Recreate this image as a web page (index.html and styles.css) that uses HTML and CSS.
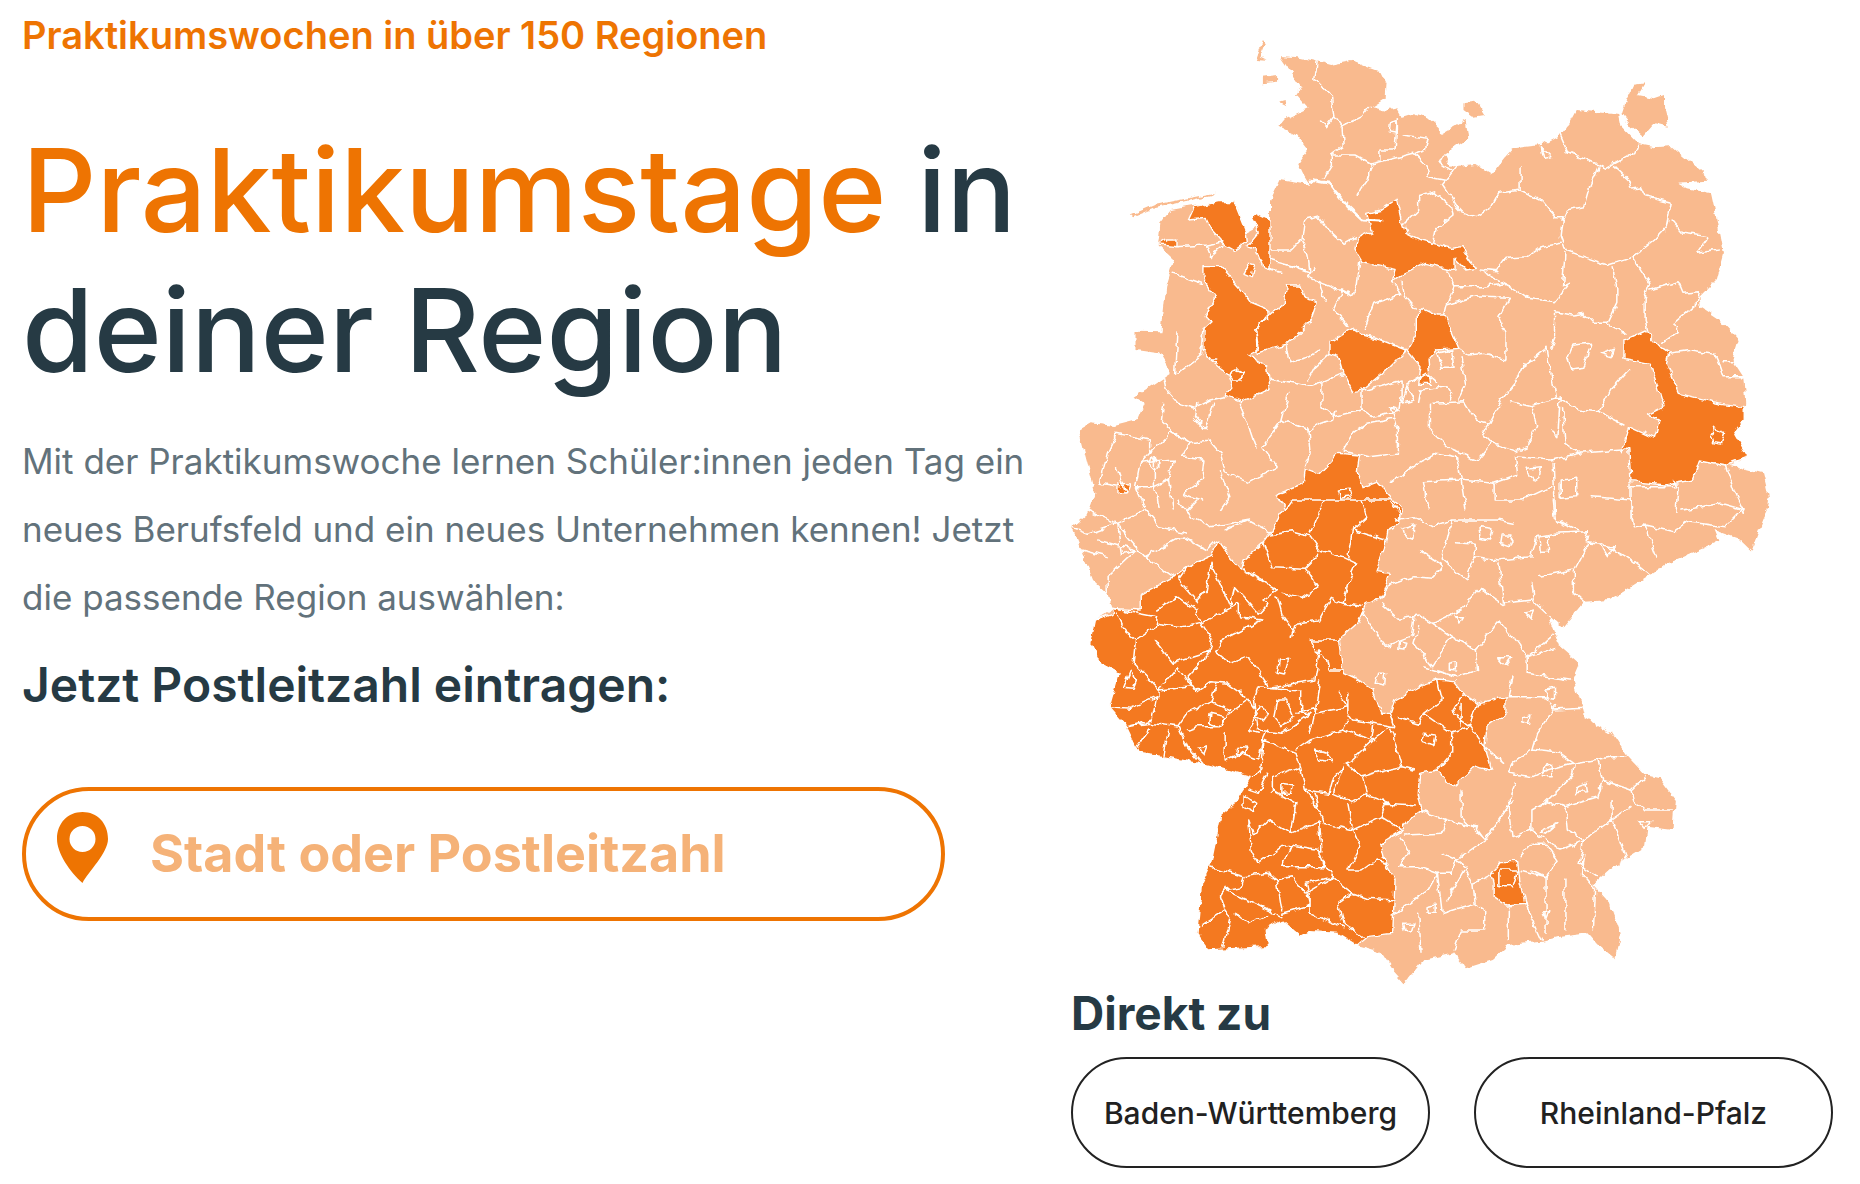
FILE: index.html
```html
<!DOCTYPE html>
<html lang="de">
<head>
<meta charset="utf-8">
<title>Praktikumstage in deiner Region</title>
<link rel="stylesheet" href="styles.css">
</head>
<body>
<main class="page">
  <section class="intro">
    <p class="kicker">Praktikumswochen in über 150 Regionen</p>
    <h1 class="headline"><span class="accent">Praktikumstage</span> in<br>deiner Region</h1>
    <p class="lead">Mit der Praktikumswoche lernen Schüler:innen jeden Tag ein neues Berufsfeld und ein neues Unternehmen kennen! Jetzt die passende Region auswählen:</p>
    <h2 class="plz-title">Jetzt Postleitzahl eintragen:</h2>
    <div class="search">
      <svg class="pin" viewBox="0 0 51 71"><path fill-rule="evenodd" d="M25.5 0C11 0 0 11 0 27C0 41 13 60 25.5 71C31 60 51 41 51 27C51 11 40 0 25.5 0ZM25.5 14A13 13 0 1 1 25.5 40A13 13 0 1 1 25.5 14Z"/></svg>
      <span class="search-text">Stadt oder Postleitzahl</span>
    </div>
  </section>
  <section class="side">
    <svg class="map" viewBox="0 0 740 965">
      <defs>
        <filter id="rough" x="-2%" y="-2%" width="104%" height="104%" color-interpolation-filters="sRGB">
          <feTurbulence type="fractalNoise" baseFrequency="0.11" numOctaves="2" seed="4" result="n"/>
          <feDisplacementMap in="SourceGraphic" in2="n" scale="7" xChannelSelector="R" yChannelSelector="G"/>
        </filter>
      </defs>
      <g filter="url(#rough)">
        <g transform="scale(.4719 .33333)">
          <!-- north half -->
          <path class="land" d="M466,108 505,112 540,122 575,135 620,122 650,140 680,155 692,190 690,235 660,262 690,272 715,265 725,290 750,280 780,295 805,325 805,345 860,300 865,355 815,405 825,440 880,432 915,462 945,408 960,385 1020,375 1060,345 1080,310 1095,270 1160,280 1185,285 1190,320 1225,372 1260,382 1295,378 1330,420 1370,470 1370,482 1310,488 1330,505 1380,520 1392,600 1405,700 1390,780 1355,830 1358,860 1395,895 1438,960 1425,1020 1448,1070 1452,1150 1450,1200 1430,1240 1458,1310 1420,1335 1490,1360 1502,1430 1495,1480 60,1480 75,1420 40,1230 65,1210 115,1218 165,1200 180,1150 158,1130 215,1078 235,1060 210,1000 160,990 160,935 215,937 225,800 242,720 208,675 213,610 235,570 272,560 340,545 370,545 395,640 420,620 405,590 415,580 445,600 445,540 465,480 530,495 515,460 505,430 525,390 500,345 465,320 480,295 525,265 500,225 510,200ZM415,120 430,60 436,70 425,112 440,122ZM430,170 460,165 460,185 430,190ZM465,245 478,240 480,256ZM855,250 880,245 898,285 875,290 855,270ZM1215,195 1240,190 1225,225 1260,235 1280,225 1280,260 1290,320 1260,310 1235,350 1210,320 1190,285 1200,240ZM150,585 200,555 330,518 320,526 200,565 155,592Z"/>
          <g transform="translate(0 1440)">
            <path class="land" d="M1500,30 1490,60 1465,155 1435,115 1385,90 1395,125 1320,170 1285,190 1250,225 1200,270 1165,300 1110,305 1065,385 1035,345 1050,400 1060,440 1100,490 1085,540 1105,620 1110,650 1170,700 1200,765 1240,825 1270,835 1305,900 1300,990 1245,980 1240,1040 1200,1075 1165,1110 1130,1155 1165,1210 1188,1300 1175,1375 1145,1340 1120,1300 1060,1310 1020,1325 950,1335 915,1380 860,1405 835,1360 770,1380 730,1450 705,1410 680,1355 630,1335 590,1300 530,1295 510,1310 470,1260 435,1290 440,1340 315,1350 290,1300 300,1150 320,1090 340,950 365,920 405,830 310,795 220,770 165,760 135,670 105,620 125,520 85,490 65,430 75,360 110,330 100,280 70,240 45,150 25,80 55,45 60,30Z"/>
          </g>

          <!-- highlighted regions, north -->
          <path class="hot" d="M272,600 285,560 340,545 368,545 395,640 397,665 370,690 345,670 320,630 308,595ZM405,590 415,580 445,600 445,750 468,758 430,740 415,690 397,680 420,640 415,615ZM208,675 225,660 250,660 250,680ZM390,760 400,730 412,735 405,770ZM305,740 340,740 385,810 405,850 440,870 442,895 415,925 420,990 400,1005 440,1040 445,1105 385,1145 350,1125 365,1100 355,1060 320,1020 305,990 305,925 320,905 310,890 330,830 305,780ZM415,930 445,880 475,850 480,795 510,795 520,835 545,845 530,905 510,935 480,975 440,990 418,1000ZM650,580 680,570 715,535 725,600 735,640 765,660 830,685 850,680 880,745 860,750 835,715 835,750 775,730 720,770 705,785 710,745 640,725 625,690 630,655 660,635ZM570,970 620,925 640,945 680,960 735,990 700,1040 640,1110 620,1115 600,1060 590,1010 570,1000ZM735,990 755,940 755,885 770,865 800,885 815,885 845,985 800,990 780,1020 785,1090 760,1090 765,1040ZM1195,960 1240,930 1275,985 1290,1000 1285,1030 1310,1120 1400,1150 1450,1160 1450,1200 1430,1240 1458,1310 1410,1335 1355,1320 1340,1380 1285,1395 1210,1385 1205,1280 1190,1295 1205,1220 1260,1255 1270,1200 1245,1185 1280,1160 1265,1090 1250,1030 1195,1015ZM125,1390 148,1392 140,1422 125,1420ZM460,1425 515,1395 520,1345 550,1360 590,1300 635,1305 630,1350 640,1400 670,1385 725,1470 720,1500 490,1500Z"/>
          <g transform="translate(0 1440)">
            <path class="hot" d="M490,0 465,50 445,100 430,130 390,180 385,210 360,170 335,120 320,170 270,200 240,230 170,285 170,330 110,325 115,340 75,360 65,430 85,490 125,520 105,620 135,670 165,760 220,770 310,795 405,830 365,920 340,950 320,1090 300,1150 290,1300 315,1350 440,1340 435,1290 470,1260 510,1310 530,1295 590,1300 630,1335 650,1310 705,1300 710,1140 690,1090 680,1030 720,1000 745,950 765,930 757,880 760,820 800,810 830,860 850,840 880,800 915,810 900,740 905,680 945,640 945,590 885,610 855,580 835,545 800,540 775,550 710,600 700,640 680,640 660,570 630,540 600,520 590,420 630,370 650,310 680,295 700,220 670,215 690,130 695,90 720,70 720,40 700,0ZM915,1120 935,1085 970,1085 975,1150 985,1210 945,1215 920,1190 920,1150Z"/>
          </g>

          <!-- boundaries, north -->
          <path class="lines" d="M545,125 540,180 575,230 580,290 565,320 550,300M580,290 598,325 600,380 575,405 575,440 560,475M598,320 640,290 655,262M715,290 710,390 680,390 680,420M725,345 780,355 775,390 755,400M660,432 750,400 775,435 780,470 815,480M575,405 625,405 660,432 650,480 630,520M815,405 805,430 830,455M840,440 810,495 840,560 850,575 880,590 915,560 930,520 975,510 1020,540 1050,590 1065,590M1140,440 1120,510 1110,560 1075,570 1065,600M975,440 975,510M1060,345 1075,395 1140,435 1155,445 1220,395 1225,375M1175,440 1205,480 1210,505 1230,500 1240,530 1295,550 1285,620 1260,660 1215,710 1160,735 1110,710 1070,690 1060,650 1065,590M1295,600 1320,640 1375,650 1350,700 1395,690M790,665 795,630 835,585 830,560 795,515 760,530 760,570 730,610M1060,670 1020,680 990,710 945,715 925,755 890,750M1070,700 1065,800 1080,790 1050,845 990,835 950,795 895,755M1170,740 1180,800 1180,850 1160,910 1130,910 1110,880 1085,885 1050,875 1050,950 1040,985M1215,715 1250,790 1240,830 1240,900 1245,930M1250,810 1310,785 1320,820 1355,815 1350,850 1300,910 1310,935 1275,970M1160,910 1195,940M1290,1000 1340,990 1385,1000 1395,1030 1405,1070 1450,1070M1405,1025 1425,1025M240,760 300,790M245,680 310,675 345,665M310,675 320,710 345,680M445,690 490,690 510,660 525,700 530,760 470,730M445,720 520,750M515,660 520,600 550,590 570,630 600,670 625,650M540,740 525,770 555,790 590,810 600,810 580,870 610,920M550,790 560,840M635,725 630,790 620,825 600,810M710,790 720,825 665,850 645,925M725,790 730,830 755,870M820,855 880,830 950,835 930,890 945,940 945,1020 900,1000 865,1005 845,985M820,750 835,800 820,855 815,885M835,800 895,800 935,790M250,1060 300,1005 305,925M250,935 245,1060M220,1075 225,1110 250,1150 285,1165 320,1140 350,1130M445,1075 500,1090 530,1100 550,1090 600,1060M480,980 485,1025 530,1010 550,990M570,1000 540,1040 525,1080M640,1115 640,1170 580,1190 555,1160 555,1090M640,1115 725,1080 725,1130 720,1170 660,1190 640,1170M735,1095 775,1060 800,1090M760,1150 765,1110 820,1100 830,1120 825,1140M790,1150 855,1145 880,1200 910,1210 935,1140 965,1090 980,1040 1030,985M850,1010 860,1100 845,1140M1060,1130 1000,1160 955,1145M1030,985 1050,1130 1100,1170 1140,1175 1165,1110 1205,1050M1060,1130 1055,1250 1040,1230M1065,1160 1070,1270 1105,1305M1000,1160 1010,1215 990,1280 965,1295 915,1270 895,1240 910,1210M1140,1175 1195,1215M785,1150 785,1230 830,1290 885,1320 915,1270M720,1170 700,1160 715,1230 715,1300 655,1310M655,1310 600,1290 620,1240 650,1210 705,1195M470,1200 430,1280 460,1340 400,1385 350,1355 340,1300 315,1260M220,1150 215,1200 240,1235 275,1270 315,1260M290,1150 285,1190 310,1230 325,1150M380,1150 400,1220 415,1285M485,1120 470,1200 530,1230 550,1210 580,1200 585,1170M525,1220 530,1300 520,1340M800,1300 770,1320 750,1340 700,1390M1040,1320 1100,1300 1190,1290M1210,1390 1210,1500M1045,1330 1050,1480M800,1300 840,1310 850,1375M770,1385 850,1380 920,1390 970,1365 965,1310 1040,1320M920,1390 920,1440 980,1440 1040,1400M1410,1335 1430,1420 1450,1480M1310,1400 1305,1480M100,1300 120,1240 190,1260 190,1300 235,1235 275,1270 260,1310 305,1320 300,1380 260,1420M170,1330 160,1400 180,1460M200,1310 200,1400 210,1460M240,1320 230,1380 240,1470M100,1300 85,1390 130,1400M120,1340 140,1420M190,1300 170,1330 240,1320M160,1400 200,1400 230,1380M340,1355 360,1430 340,1470M290,1440 270,1470M260,1420 300,1440M770,1385 780,1470M850,1380 860,1470M1130,1430 1210,1440M1300,1380 1305,1400 1210,1400M1450,1470 1400,1450 1320,1470M330,1020 320,1020"/>
          <path class="river" d="M530,480 570,490 610,560 640,600 680,603"/>
          <path class="lines" d="M375,1050 390,1060 385,1080 365,1080 358,1062ZM1385,1222 1408,1235 1402,1272 1385,1268 1380,1245ZM590,1410 615,1405 620,1430 595,1435ZM990,1345 1020,1340 1015,1375 1005,1385 992,1365ZM1085,975 1125,970 1110,1045 1085,1050 1075,1010ZM800,1000 830,990 835,1045 810,1045ZM195,1310 210,1335 200,1350 190,1335ZM1060,1380 1095,1375 1095,1430 1060,1435ZM700,310 715,305 715,340 698,335ZM1020,380 1040,410 1025,415ZM1145,1000 1175,985 1170,1010ZM735,1100 750,1140 725,1150Z"/>

          <!-- boundaries, south -->
          <g transform="translate(0 1440)">
            <path class="lines" d="M445,105 490,95 530,110 550,150 600,170 630,190 610,250 600,310M560,0 530,100M640,0 650,50 620,90 610,170M620,90 690,120M430,130 450,200 520,205 550,160M520,205 545,260 510,295 470,280M600,310 640,320M460,290 470,340 495,390 490,410M600,310 575,295 550,360 500,370 495,400M390,210 460,270 430,300 440,310 420,340 370,260 360,320 320,190M270,200 250,240 290,305 310,270 320,190M205,330 250,290 290,330 300,370M110,325 205,350 200,380 160,420M120,340 140,400 160,420 155,490 210,570 250,500 280,560 210,570 210,590M205,370 260,380 300,370 325,425 320,455 240,490 200,420M300,370 380,310 380,350 430,360 345,420 330,455 360,490 400,470 440,555M320,455 270,530 290,575 320,545 355,550 395,590M450,560 540,540 550,450M420,560 510,570 510,640 530,640 470,700 420,690 410,600 420,560M590,420 530,420 540,450M570,510 600,510M540,450 565,480 570,510M105,620 150,625 205,590 195,660 140,680M140,680 190,670 250,680 270,640 320,605 360,630 340,680 290,680 270,690M190,690 160,750M230,690 220,770M250,680 270,740 300,790M350,700 350,780 380,760 420,780 430,720M430,720 425,820M430,720 500,760 510,800 450,830M500,750 530,720 600,690M610,580 610,640 620,660 710,680 700,640M610,660 600,690 660,720 665,670M590,580 610,620 540,640 530,700M700,680 725,800 750,810M665,720 620,780 605,790 640,830 690,810 725,800M510,800 520,870 570,880 580,830 600,800M600,800 580,880 620,905 650,880 640,830M520,870 550,930 540,880M550,930 560,970 620,990 610,910M620,990 680,950 725,990 680,1030M680,950 690,910 755,915M650,885 700,910M400,960 410,1000 440,960 490,1000 500,910 450,870M490,1000 550,965 555,1050 490,1035M400,960 405,1050 420,1090 470,1040 490,1035 470,1100 560,1100 550,1050M620,990 635,1040 610,1110 640,1110 670,1080 690,1090M560,1090 580,1130 520,1180 490,1130 460,1140 440,1120 390,1130 320,1100M390,1130 385,1160 350,1170 470,1250M460,1140 470,1230M530,1210 520,1150 580,1130M575,1130 620,1180 650,1195 710,1200M620,1180 590,1210 600,1270 640,1310M530,1180 530,1240 600,1280M470,1240 530,1215M300,1275 350,1230 360,1250 345,1340M370,1240 400,1270 440,1245M350,1165 340,1185 350,1230M360,640 400,600 420,640 400,690 420,700M440,690 430,720M320,605 330,550M500,640 545,620M550,540 540,640M410,830 430,800M440,820 420,880 400,870M450,830 450,880M700,680 660,720 M800,540 810,600 770,640 760,670 715,650M770,640 830,700 830,760 800,810M830,700 870,680 900,740M855,580 830,640 870,680M850,610 850,680M885,610 870,680"/>
            <path class="lines" d="M710,60 750,50 790,80 830,60 925,60 960,70M830,60 810,180 860,240 880,170 880,130 840,125M760,150 810,195 790,235 750,230 700,255 680,290M880,170 930,180 1000,170M930,190 940,310 1000,300 1030,340M1000,170 1010,110 1050,100 1120,95 1115,125 1150,130 1200,170 1250,225M1045,0 1050,60 1100,90M1210,0 1215,80 1240,75 1300,95 1330,65 1410,80 1445,30M1240,75 1265,175M1120,130 1090,210 1090,280 1110,305M1010,230 1090,210M1000,250 1005,300M680,310 715,355 760,345 790,370 850,330 890,265 940,315M640,340 690,440 745,410 750,350M760,380 750,430 790,500 830,410 790,370M830,410 880,450 885,510 840,530 770,500M880,450 930,360 960,410 990,470 1050,440M1050,400 990,470 990,520 1080,540M960,530 950,590 1030,590 1045,630 1110,625M1050,620 1010,700 1000,750 960,790 950,820 1000,830 1030,810 1085,790M900,740 940,790M1000,750 1060,760 1090,790 1170,770 1200,770M1140,780 1150,840 1210,870 1240,830M1090,790 1085,830 1030,905 1070,920 1140,890 1150,840M1030,905 1000,930 1000,990 960,1010 950,900 965,850M850,870 850,950 900,1020 960,900M765,930 820,960 810,1000 730,1005M820,960 880,980 900,1020 840,1080 860,1100 820,1200M1070,920 1075,990 1110,1020 1170,960 1170,900M1210,920 1170,960 1200,1075M1300,930 1240,930 1215,900 1210,870M1000,990 1060,1050 1110,1020 1100,1090 1140,1130M975,1070 1000,1030 1030,1030 1055,1080 1030,1130 1000,1110M975,1110 1030,1130 1030,1300M1070,1140 1070,1290M1110,1060 1105,1120 1135,1170 1130,1290M860,1110 875,1150 920,1120M810,1060 840,1080 830,1120 800,1120 760,1100 720,1100 740,1050 720,1010M700,1250 780,1170 800,1120 810,1240 880,1210 900,1230 900,1290 850,1290 835,1350M875,1150 880,1210M950,1220 950,1320M985,1210 1020,1320M760,1240 765,1360M25,80 60,100 120,70 130,160 160,150 100,230 100,280M120,70 180,170 240,230M60,30 120,70 180,30M180,170 260,110 310,150 330,120M250,0 280,50 320,80 400,60 450,100M180,30 210,80 270,100M350,90 400,60M80,120 160,150M45,150 100,170"/>
            <path class="lines" d="M150,510 162,540 155,565 135,562ZM318,640 350,650 340,680 315,670ZM770,700 795,705 790,735 768,725ZM290,745 312,738 305,765ZM375,742 398,745 392,765 372,760ZM468,850 495,855 490,880 468,880ZM390,885 415,910 412,935 390,920ZM540,750 565,760 575,785 550,780ZM462,600 480,600 495,650 470,680 455,650ZM420,615 440,640 430,660 415,650ZM465,480 485,478 475,525 460,520ZM675,520 690,520 688,555 670,550ZM720,425 735,430 730,450 718,448ZM825,490 840,485 840,510 825,508ZM930,470 958,470 945,495ZM985,335 1005,330 1000,358ZM1025,570 1050,565 1050,595 1035,590ZM980,650 998,645 995,670 978,665ZM1025,800 1040,795 1045,830 1022,830ZM1095,860 1115,850 1118,875 1092,878ZM1228,965 1252,965 1240,985ZM1018,995 1055,970 1030,1000ZM1025,1235 1038,1232 1032,1255ZM780,1220 795,1215 795,1240 780,1240ZM728,1270 750,1270 745,1295 732,1295ZM890,80 915,85 910,120 892,115ZM935,105 960,105 950,140 932,130ZM1015,110 1035,108 1035,160 1018,160ZM725,85 750,75 748,115 728,105ZM1145,135 1175,140 1160,170ZM835,350 855,350 845,372ZM930,1110 970,1110 960,1160 930,1160Z"/>
          </g>
        </g>
      </g>
    </svg>
    <h2 class="direct-title">Direkt zu</h2>
    <div class="direct-links">
      <a class="pill">Baden-Württemberg</a>
      <a class="pill">Rheinland-Pfalz</a>
    </div>
  </section>
</main>
</body>
</html>
```

FILE: styles.css
```css
* { box-sizing: border-box; }
html, body { margin: 0; padding: 0; background: #fff; }
body { font-family: Inter, "Liberation Sans", sans-serif; color: #263a44; }

.page {
  display: flex;
  width: 1860px;
  height: 1184px;
  overflow: hidden;
}

.intro {
  width: 1071px;
  flex: none;
  padding: 12px 0 0 22px;
}

.kicker {
  margin: 0;
  font-size: 38px;
  line-height: 46px;
  font-weight: 600;
  color: #ee7402;
}

.headline {
  margin: 62px 0 0;
  font-size: 116px;
  line-height: 140px;
  font-weight: 500;
  color: #263a44;
}
.accent { color: #ee7402; }

.lead {
  margin: 27px 0 0;
  width: 1040px;
  font-size: 35px;
  line-height: 68px;
  color: #62727b;
}

.plz-title {
  margin: 24px 0 0;
  font-size: 48px;
  line-height: 60px;
  font-weight: 600;
  color: #263a44;
}

.search {
  display: flex;
  align-items: center;
  gap: 42px;
  width: 923px;
  height: 134px;
  margin-top: 72px;
  padding-left: 31px;
  border: 4px solid #ee7402;
  border-radius: 67px;
  background: #fff;
}
.pin {
  flex: none;
  width: 51px;
  height: 71px;
  margin-bottom: 14px;
  fill: #ee7402;
}
.search-text {
  font-size: 52px;
  line-height: 60px;
  font-weight: 700;
  color: #f5b278;
}

.side {
  flex: none;
  width: 789px;
  padding-top: 20px;
}

.map {
  display: block;
  width: 740px;
  height: 965px;
  margin-left: -11px;
}
.map path {
  vector-effect: non-scaling-stroke;
  stroke-linejoin: round;
  stroke-linecap: round;
}
.land { fill: #f9ba8e; stroke: none; }
.hot { fill: #f47920; stroke: #fff; stroke-width: 1.4; }
.lines { fill: none; stroke: #fff; stroke-width: 1.5; }
.river { fill: none; stroke: #fff; stroke-width: 3; }

.direct-title {
  margin: 0;
  font-size: 46px;
  line-height: 56px;
  font-weight: 700;
  color: #263a44;
}

.direct-links {
  display: flex;
  gap: 44px;
  margin-top: 16px;
}
.pill {
  display: flex;
  align-items: center;
  justify-content: center;
  width: 359px;
  height: 111px;
  border: 2px solid #222;
  border-radius: 56px;
  font-size: 30px;
  font-weight: 500;
  color: #212121;
}
```
